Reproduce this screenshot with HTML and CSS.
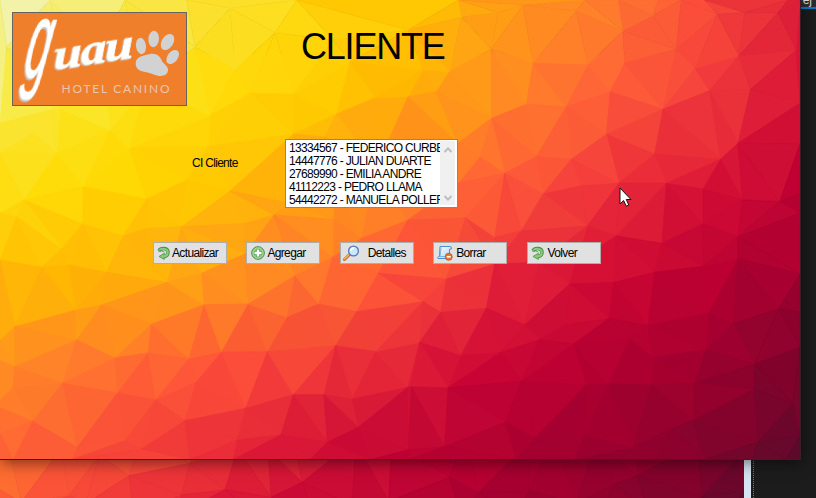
FILE: index.html
```html
<!DOCTYPE html>
<html lang="es">
<head>
<meta charset="utf-8">
<title>Cliente</title>
<link rel="stylesheet" href="styles.css">
</head>
<body>
<svg class="defs" width="0" height="0" aria-hidden="true">
  <defs>
    <g id="mesh"></g>
    <linearGradient id="green" x1="0" y1="0" x2="1" y2="1"><stop offset="0" stop-color="#5fa95c"/><stop offset="1" stop-color="#9bd389"/></linearGradient>
    <linearGradient id="sheet" x1="0" y1="0" x2="1" y2="1"><stop offset="0" stop-color="#fff"/><stop offset="1" stop-color="#a9d4f5"/></linearGradient>
    <symbol id="refresh" viewBox="0 0 14 14">
      <path d="M2 4.800C4 1.200 11 1.800 11 6.300C11 9 9 10.600 6.500 10.700" fill="none" stroke="#4a9049" stroke-width="3.600"/>
      <path d="M7.300 7.300V13.400L2 10.500Z" fill="#8bc97d" stroke="#4a9049" stroke-width=".8"/>
      <path d="M2.200 4.700C4.200 1.800 10.800 2.200 10.800 6.300C10.800 8.800 9 10.400 6.300 10.600" fill="none" stroke="#8fcb83" stroke-width="2"/>
      <path d="M1.500 5.400C3.500 4.400 6.600 4.600 7.200 6.400" fill="none" stroke="#4a9049" stroke-width="1"/>
    </symbol>
  </defs>
</svg>
<div class="desktop">
  <div class="ide"><div class="tabstrip"><span>ej</span></div></div>
  <div class="back-form"><svg width="744" height="498"><use href="#mesh" x="-56" y="55"/></svg><div class="back-edge"></div><div class="dots"></div></div>

  <main class="form">
    <svg class="backdrop" width="800" height="459"><use href="#mesh"/></svg>
    <header class="head">
      <svg class="logo" width="175" height="94" viewBox="12 12 175 94">
        <rect x="12.5" y="12.5" width="174" height="93" fill="#f07f2c" stroke="#646464"/>
        <g class="script">
          <text class="cap" transform="translate(22 77) skewX(-11) scale(.8 2)">g</text>
          <text class="rest" transform="translate(54 70) rotate(-9) skewX(-8) scale(1.2 1)">uau</text>
        </g>
        <text class="sub" x="61.5" y="92.5" textLength="108">HOTEL CANINO</text>
        <g fill="#d1d2d3">
          <ellipse cx="141" cy="46" rx="5" ry="8.2" transform="rotate(-8 141 46)"/>
          <ellipse cx="153.7" cy="39" rx="5.3" ry="8.2" transform="rotate(4 153.7 39)"/>
          <ellipse cx="167.5" cy="42" rx="5.8" ry="8.8" transform="rotate(32 167.5 42)"/>
          <ellipse cx="172.7" cy="57" rx="5.1" ry="8" transform="rotate(38 172.7 57)"/>
          <path d="M136 61C138 56 146 55 151 53.8C156 53 160 56 161.500 60C163 64 168 65.500 168 70C168 75 163 76.500 158 75.700C153 75 149 72 144 71.700C138 71 134.500 67 136 61Z"/>
        </g>
      </svg>
      <h1>CLIENTE</h1>
    </header>

    <section class="field">
      <label for="clients">CI Cliente</label>
      <div class="list" id="clients">
        <ul>
          <li>13334567 - FEDERICO CURBELO</li>
          <li>14447776 - JULIAN DUARTE</li>
          <li>27689990 - EMILIA ANDRE</li>
          <li>41112223 - PEDRO LLAMA</li>
          <li>54442272 - MANUELA POLLERO</li>
        </ul>
        <div class="scroll">
          <svg width="10" height="8" viewBox="0 0 10 8"><path d="M1.500 6L5 2.500L8.500 6"/></svg>
          <svg width="10" height="8" viewBox="0 0 10 8"><path d="M1.500 2L5 5.500L8.500 2"/></svg>
        </div>
      </div>
    </section>

    <nav class="actions">
      <button class="b1"><svg width="14" height="14"><use href="#refresh"/></svg><span>Actualizar</span></button>
      <button class="b2"><svg width="14" height="14" viewBox="0 0 14 14"><circle cx="7" cy="7" r="6.300" fill="#8bc57c" stroke="#438a45"/><circle cx="7" cy="7" r="5.200" fill="none" stroke="#b5dda9" stroke-width=".8"/><path d="M7 3.300V10.700M3.300 7H10.700" stroke="#4b984a" stroke-width="4"/><path d="M7 3.500V10.500M3.500 7H10.500" stroke="#fff" stroke-width="2.500"/></svg><span>Agregar</span></button>
      <button class="b3"><svg width="17" height="16" viewBox="0 0 17 16"><path d="M1.500 14.500L6.500 9.500" stroke="#bd7130" stroke-width="3" stroke-linecap="round"/><path d="M1.500 14L6 9.500" stroke="#f5b355" stroke-width="1.500" stroke-linecap="round"/><circle cx="10.500" cy="6" r="4.900" fill="#c9eafd" stroke="#5777bd" stroke-width="1.300"/><path d="M7.800 6A3 3 0 0 1 11 3" fill="none" stroke="#fff" stroke-width="1.600"/></svg><span>Detalles</span></button>
      <button class="b4"><svg width="16" height="16" viewBox="0 0 16 16"><path d="M3 1.500H13Q15 1.500 14.300 4L12.500 4.200V13.500H1Q.2 12 1.500 11.500H2.500Z" fill="url(#sheet)" stroke="#4c8fd0"/><path d="M3 1.500Q4.500 2 4 4L3 11.500H10L11 13.500" fill="none" stroke="#6aaae0" stroke-width=".8"/><circle cx="11.700" cy="11.800" r="3.500" fill="#e8792c" stroke="#c14d13" stroke-width=".8"/><path d="M9.700 11.800H13.700" stroke="#fff" stroke-width="1.600"/></svg><span>Borrar</span></button>
      <button class="b5"><svg width="14" height="14"><use href="#refresh"/></svg><span>Volver</span></button>
    </nav>
  </main>
  <svg class="cursor" width="13" height="21" viewBox="0 0 13 21"><path d="M1 1V17L4.600 13.500L7.200 19.200L9.800 18L7.300 12.500H12Z" fill="#fff" stroke="#1b0c12"/></svg>
</div>
<script src="mesh.js"></script>
</body>
</html>
```
FILE: styles.css
```css
* { box-sizing: border-box; }
body { margin: 0; overflow: hidden; background: #1c1c1c; font-family: "Liberation Sans", Arial, sans-serif; font-size: 12px; color: #000; }
.defs { position: absolute; }
.desktop { position: relative; width: 816px; height: 498px; overflow: hidden; }
.ide { position: absolute; inset: 0; background: #1c1c1c; }
.tabstrip { height: 9px; overflow: hidden; background: #2d2d30; border-bottom: 2px solid #007acc; text-align: right; padding-right: 4px; color: #ddd; font-size: 12px; line-height: 12px; }
.tabstrip span { display: block; margin-top: -6px; }
.back-form { position: absolute; inset: 0 auto auto 0; display: flex; height: 498px; }
.back-form svg { display: block; }
.back-edge { width: 7px; margin-top: 459px; background: #d6e4f1; }
.dots { width: 1px; margin: 459px 0 0 2px; background: repeating-linear-gradient(#777 0 1px, #1c1c1c 1px 2px); }

.form { position: absolute; left: 0; top: 0; width: 801px; height: 460px; border: solid #3a2026; border-width: 0 1px 1px 0; box-shadow: 1px 3px 14px rgba(0,0,0,.5); overflow: hidden; }
.backdrop { position: absolute; left: 0; top: 0; z-index: -1; }
.form { isolation: isolate; }
.head { display: flex; padding: 12px 0 0 12px; height: 139px; }
.logo { display: block; flex: none; }
.script text { fill: #fff; stroke: #fff; stroke-width: .6; filter: drop-shadow(-1px 1.5px 0 #ccc8c5); }
.cap { font: italic 54px "Liberation Sans", sans-serif; }
.rest { font: italic bold 43px "Liberation Serif", serif; letter-spacing: -1px; }
.sub { font: 12px Lato, sans-serif; fill: #e8c6a9; }
h1 { margin: 14px 0 0 114px; font-size: 36px; line-height: 42px; font-weight: 400; letter-spacing: -1.2px; }
.field { display: flex; align-items: flex-start; padding-left: 192px; }
.field label { width: 93px; padding-top: 17px; line-height: 14px; letter-spacing: -.7px; }
.list { display: flex; width: 173px; height: 69px; padding: 1px; border: 1px solid #828790; background: #fff; }
.list ul { flex: 1; min-width: 0; margin: 0; padding: 0 0 0 2px; list-style: none; overflow: hidden; }
.list li { height: 13px; line-height: 14px; white-space: nowrap; letter-spacing: -.67px; }
.scroll { display: flex; flex-direction: column; justify-content: space-between; align-items: center; width: 15px; margin: 0 1px 1px 0; padding: 5px 0 3px; background: #f0f0f0; }
.scroll svg { flex: none; }
.scroll path { fill: none; stroke: #bfbfbf; stroke-width: 2; }
.actions { display: grid; grid-template-columns: repeat(5, 74px); column-gap: 19.4px; padding: 34px 0 0 153px; }
.actions button { display: flex; align-items: center; height: 22px; padding: 0; border: 1px solid #adadad; border-radius: 0; background: #e1e1e1; font: inherit; line-height: 20px; letter-spacing: -.65px; color: #000; }
.actions svg { flex: none; display: block; }
.b1 svg { margin: 0 1px 0 3px; }
.b2 svg { margin: 0 2px 0 4px; }
.b3 svg { margin: 0 8px 0 2px; }
.b4 svg { margin: 0 3px 0 3px; }
.b5 svg { margin: 0 3px 0 3px; }
.cursor { position: absolute; left: 619px; top: 187px; }
```
FILE: mesh.js
```js
// Low-poly backdrop: vertices in thirds of a pixel, grouped by quadrant.
const quads = [
  [0, 0, "0,0 150,0 20,140 150,330 375,0 560,0 690,25 890,0 825,98 585,140 705,210 630,347 750,280 880,283 1010,342 1127,293 880,402 1000,120 1050,185 330,390 100,400 180,325 0,370 0,460 170,460 72,600 250,560 440,597 388,445 560,540 690,573 625,440 545,680 440,685 370,708 248,672 50,650 0,640 735,670 822,645 1000,658 975,410 1085,715 870,610 1005,560 1130,500 300,150 440,260 200,230"],
  [1224, 0, "160,50 270,38 345,15 250,147 125,215 85,275 45,210 0,290 505,33 375,190 355,313 250,355 540,195 475,320 645,93 650,190 607,275 595,403 735,47 750,0 805,148 765,328 862,205 905,272 928,43 820,0 890,0 993,167 1010,38 1110,38 1165,150 1028,268 1176,310 1140,0 1176,0 990,430 938,478 740,462 633,550 490,478 385,470 290,520 405,582 518,558 215,470 150,430 150,550 172,653 260,713 340,693 538,678 625,708 775,550 885,567 762,730 885,672 1003,600 1115,605 1176,432 1176,580 990,710 1176,640 630,0 530,0 150,0 0,90 0,660"],
  [0, 747, "0,33 125,55 207,48 320,70 185,0 228,183 45,233 0,275 305,168 502,100 455,225 230,273 45,353 0,335 38,418 0,455 188,403 98,517 0,477 0,552 345,327 445,311 352,432 567,330 613,167 605,73 745,165 735,15 665,309 588,400 467,453 375,575 232,595 215,632 425,600 555,515 570,632 737,478 712,573 803,308 862,205 885,80 957,165 998,25 1070,188 1135,73 1007,290 1127,308 880,437 972,437 1057,450 1075,535 982,580 843,557 930,632 700,632 40,632 0,632 1224,415 1110,632"],
  [1224, 747, "115,90 45,158 98,190 235,178 260,45 350,228 485,105 395,40 503,40 617,100 740,70 603,208 473,228 395,272 278,310 158,320 35,280 10,413 120,417 340,397 497,285 665,270 720,230 735,325 903,192 887,52 990,30 975,225 1112,180 1176,75 1176,190 895,302 1040,345 1176,295 860,403 730,408 600,405 535,408 293,520 110,593 0,603 380,567 530,560 325,632 500,632 675,597 790,540 855,515 745,632 893,632 1050,580 1040,420 1155,465 1176,560 1035,632 1135,632 1176,632 0,632"]
];
const pts = [];
for (const [ox, oy, list] of quads)
  for (const p of list.split(" ")) {
    const [x, y] = p.split(",").map(Number);
    pts.push([(x + ox) / 3, (y + oy) / 3]);
  }

// Bowyer-Watson triangulation
function circle(a, b, c, v) {
  const [ax, ay] = v[a], [bx, by] = v[b], [cx, cy] = v[c];
  const d = 2 * (ax * (by - cy) + bx * (cy - ay) + cx * (ay - by));
  const A = ax * ax + ay * ay, B = bx * bx + by * by, C = cx * cx + cy * cy;
  const x = (A * (by - cy) + B * (cy - ay) + C * (ay - by)) / d;
  const y = (A * (cx - bx) + B * (ax - cx) + C * (bx - ax)) / d;
  return { t: [a, b, c], x, y, r: (ax - x) ** 2 + (ay - y) ** 2 };
}
const n = pts.length;
const v = pts.map(([x, y], i) => [x + (i % 7) * 1e-3, y + (i % 5) * 1e-3]).concat([[-9000, -7000], [9500, -7000], [400, 12000]]);
let tris = [circle(n, n + 1, n + 2, v)];
for (let i = 0; i < n; i++) {
  const edges = new Map();
  tris = tris.filter(q => {
    if ((v[i][0] - q.x) ** 2 + (v[i][1] - q.y) ** 2 >= q.r) return true;
    for (const [a, b] of [[0, 1], [1, 2], [2, 0]]) {
      const e = [q.t[a], q.t[b]].sort((m, k) => m - k), key = e.join();
      edges.has(key) ? edges.delete(key) : edges.set(key, e);
    }
    return false;
  });
  for (const [a, b] of edges.values()) tris.push(circle(a, b, i, v));
}

// Colour field sampled on a 100 x 92 grid
const field = [
  "f0f5c0 f6ee70 fae238 fedc14 ffc800 ffa012 ff7e2c fb4e3a dc1c38",
  "f8ec50 fbe41e ffdc08 ffd000 ffb402 ff8a24 ff603a f4403c d60e36",
  "fedc10 ffda00 ffc800 ffa60e ff802a ff5a3a f2383b d81036 bc0032",
  "ffc000 ffb006 ff9e18 ff762e ff523a e8283a d00834 bc0032 9c002e",
  "ff9022 ff7032 ff543a f43c3a de1c38 c80234 b20031 9c002e 7c042c",
  "ff5e38 f8463a e82838 d00a34 bc0032 a80030 94002e 80042c 580a2a"
].map(r => r.split(" ").map(h => [0, 2, 4].map(k => parseInt(h.substr(k, 2), 16))));
function colour(x, y, k) {
  const s = ((k * 7919) % 23 - 11) * 0.6 - 3;
  const gx = Math.max(0, Math.min(7.99, (x + s) / 100)), gy = Math.max(0, Math.min(4.99, (y + s) / 92));
  const i = Math.floor(gx), j = Math.floor(gy), u = gx - i, w = gy - j;
  return "rgb(" + [0, 1, 2].map(c => Math.round(
    (field[j][i][c] * (1 - u) + field[j][i + 1][c] * u) * (1 - w) +
    (field[j + 1][i][c] * (1 - u) + field[j + 1][i + 1][c] * u) * w)) + ")";
}
const g = document.getElementById("mesh");
tris.forEach((q, k) => {
  if (q.t.some(i => i >= n)) return;
  const p = q.t.map(i => pts[i]);
  const el = document.createElementNS("http://www.w3.org/2000/svg", "polygon");
  el.setAttribute("points", p.map(a => a.join()).join(" "));
  const c = colour((p[0][0] + p[1][0] + p[2][0]) / 3, (p[0][1] + p[1][1] + p[2][1]) / 3, k);
  el.setAttribute("fill", c);
  el.setAttribute("stroke", c);
  el.setAttribute("stroke-width", ".7");
  g.appendChild(el);
});
```
